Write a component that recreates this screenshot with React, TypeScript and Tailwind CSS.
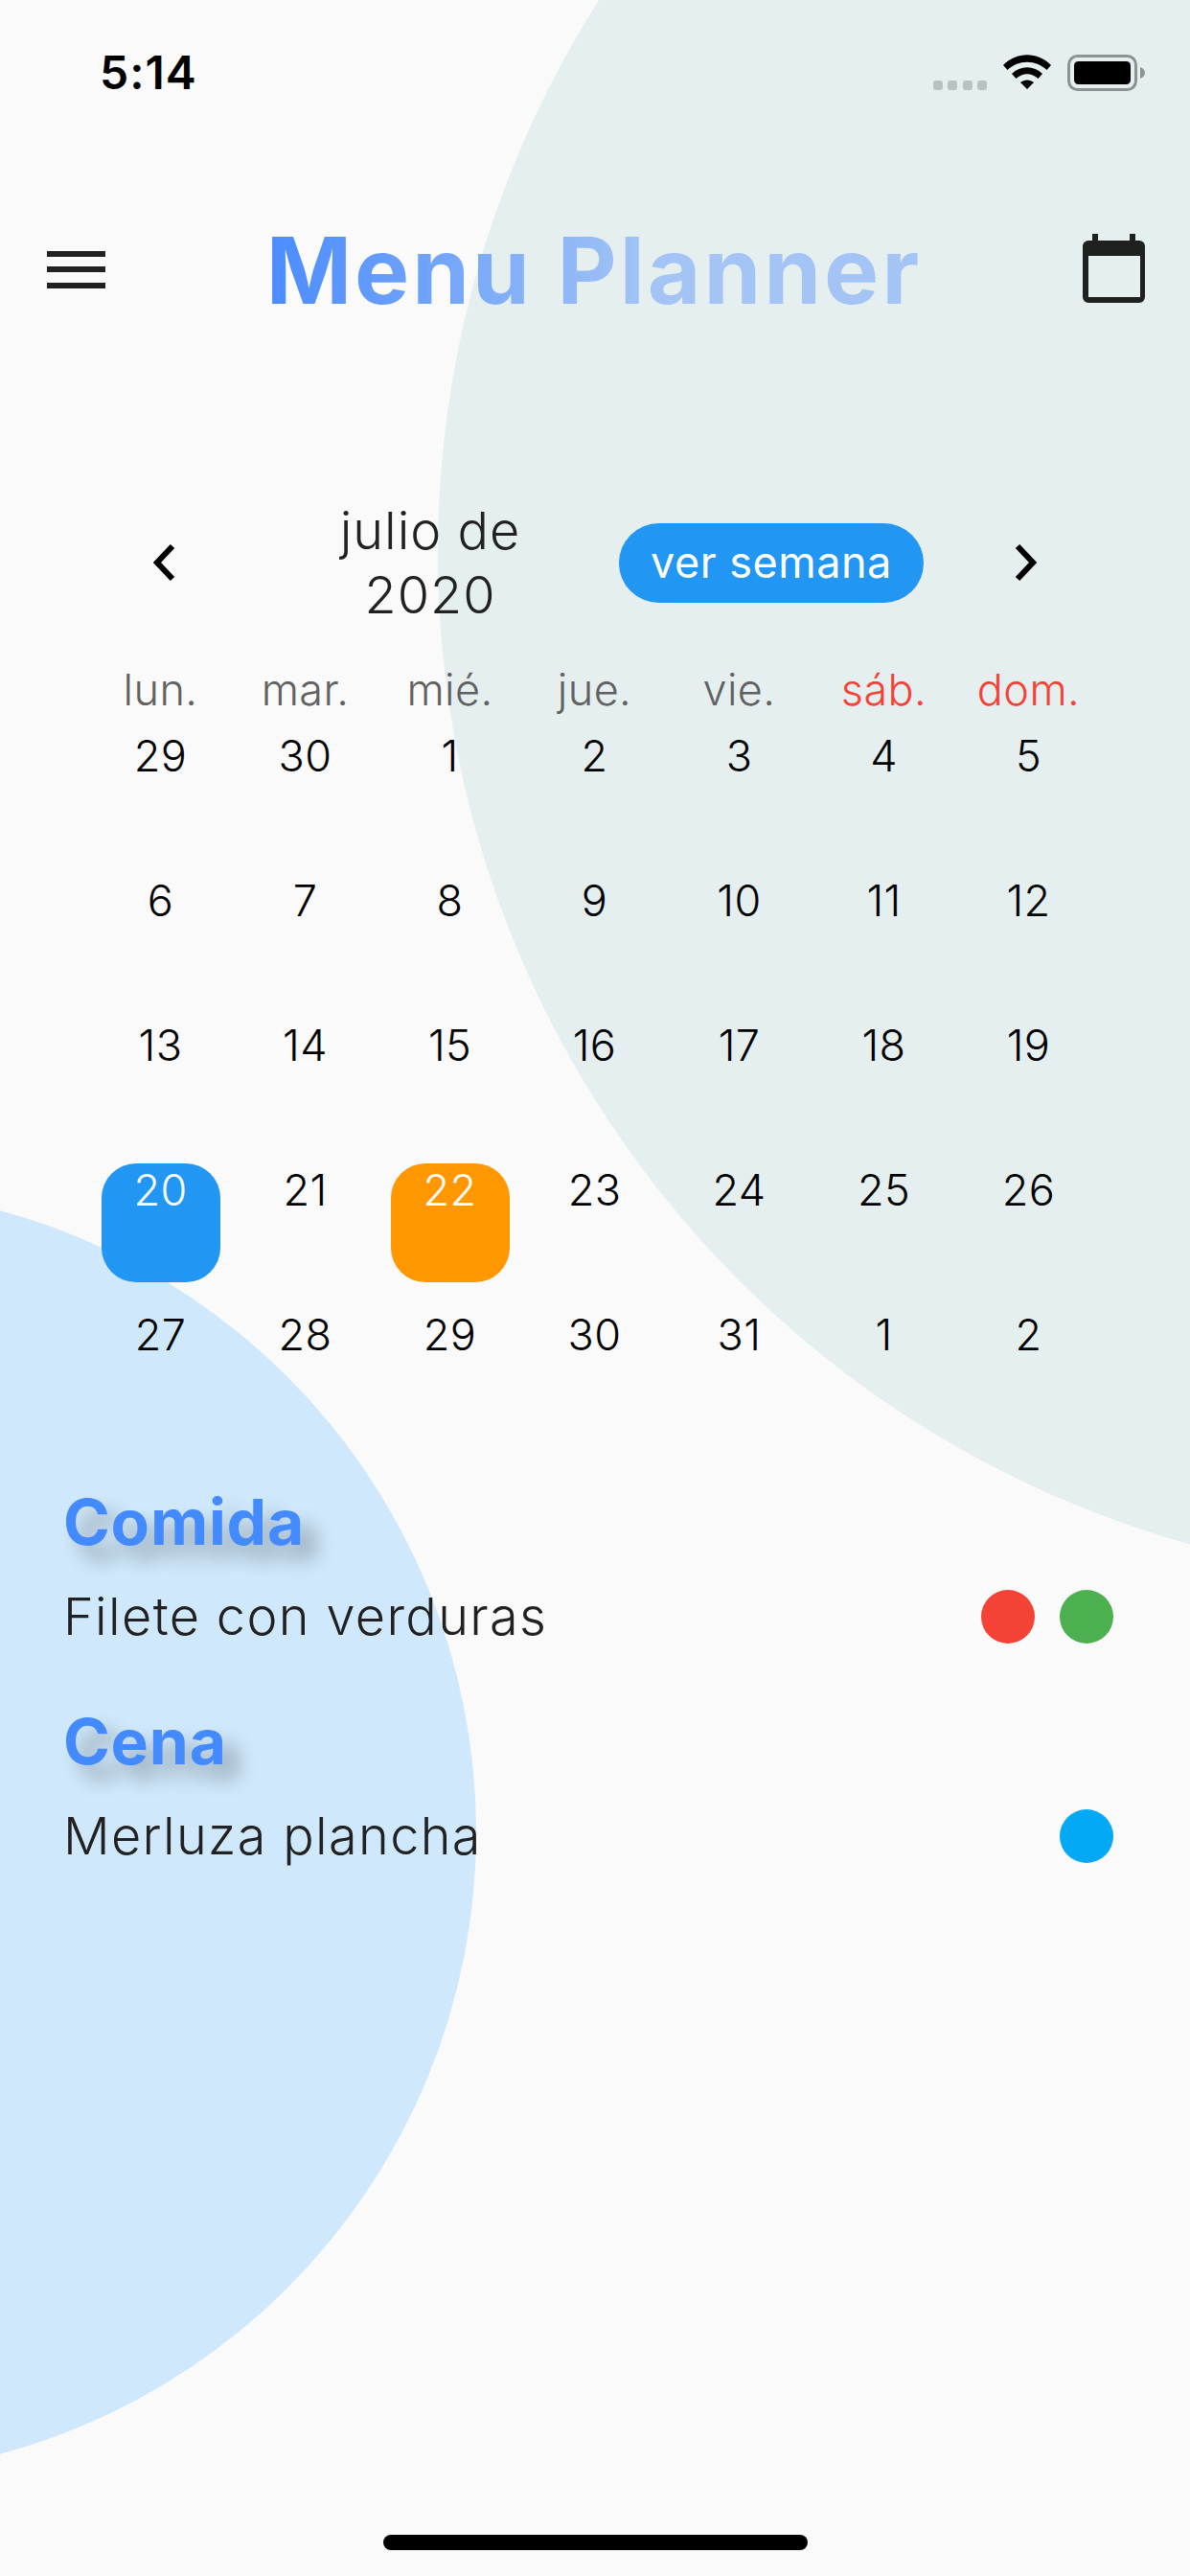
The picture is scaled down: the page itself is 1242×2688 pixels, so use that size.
const font = "font-['Inter','Liberation_Sans',sans-serif]";

const weekdays: [string, boolean][] = [
  ["lun.", false],
  ["mar.", false],
  ["mié.", false],
  ["jue.", false],
  ["vie.", false],
  ["sáb.", true],
  ["dom.", true],
];

const days = [
  29, 30, 1, 2, 3, 4, 5, 6, 7, 8, 9, 10, 11, 12, 13, 14, 15, 16, 17, 18, 19, 20, 21, 22, 23, 24, 25, 26, 27, 28, 29, 30,
  31, 1, 2,
];

function Wifi() {
  return (
    <svg width="50" height="36" viewBox="0 0 50 36" fill="#000">
      <path d="M0 11 C14 -3.5 36 -3.5 50 11 L45.5 16 C34 5 16 5 4.5 16 Z" />
      <path d="M9 20 C18 11 32 11 41 20 L36.5 25 C29.5 18.5 20.5 18.5 13.5 25 Z" />
      <path d="M18 29 C22 25.5 28 25.5 32 29 L25 36 Z" />
    </svg>
  );
}

function Battery() {
  return (
    <svg width="81" height="38" viewBox="0 0 81 38">
      <rect x="1.5" y="1.5" width="70" height="35" rx="9" fill="none" stroke="#8c9493" strokeWidth="3" />
      <rect x="7" y="7" width="59" height="24" rx="4.5" fill="#000" />
      <path d="M76 13 C79 14 81 16.5 81 19 C81 21.5 79 24 76 25 Z" fill="#8c9493" />
    </svg>
  );
}

function CalendarIcon() {
  return (
    <svg width="65" height="72" viewBox="0 0 65 72" className="mb-[4px]">
      <rect x="10" y="0" width="6" height="10" fill="#1e2120" />
      <rect x="49" y="0" width="6" height="10" fill="#1e2120" />
      <path
        fillRule="evenodd"
        fill="#1e2120"
        d="M6 7 H59 A6 6 0 0 1 65 13 V66 A6 6 0 0 1 59 72 H6 A6 6 0 0 1 0 66 V13 A6 6 0 0 1 6 7 Z M6 23 V66 H60 V23 Z"
      />
    </svg>
  );
}

function Chevron({ right }: { right?: boolean }) {
  return (
    <svg width="23" height="38" viewBox="0 0 23 38" fill="none" stroke="#000" strokeWidth="6" strokeLinejoin="miter">
      <path d={right ? "M3 2 L19 19 L3 36" : "M20 2 L4 19 L20 36"} />
    </svg>
  );
}

function Dot({ color }: { color: string }) {
  return <span className={`block w-[56px] h-[56px] rounded-full ${color}`} />;
}

function Meal({ title, dish, dots }: { title: string; dish: string; dots: string[] }) {
  return (
    <section className="flex flex-col">
      <h2 className="h-[80px] leading-[80px] text-[66px] font-bold tracking-[0.8px] text-[#448aff] [text-shadow:15px_15px_20px_rgba(0,0,0,0.3)]">
        {title}
      </h2>
      <div className="mt-[24px] flex h-[70px] items-center justify-between">
        <span className="text-[54px] leading-[70px] font-[350] tracking-[1.35px] text-[#212121]">{dish}</span>
        <div className="flex gap-[26px]">
          {dots.map((d) => (
            <Dot key={d} color={d} />
          ))}
        </div>
      </div>
    </section>
  );
}

export default function App() {
  return (
    <div className={`relative w-[1242px] h-[2688px] overflow-hidden bg-[#fafafa] ${font}`}>
      <div className="absolute left-[457px] top-[-497px] w-[2148px] h-[2148px] rounded-full bg-[#e5eff0]" />
      <div className="absolute left-[-847px] top-[1240px] w-[1344px] h-[1344px] rounded-full bg-[#cfe8fb]" />

      <div className="relative flex flex-col">
        <header className="flex h-[132px] items-start justify-between pl-[104px] pr-[47px] pt-[46px]">
          <span className="text-[48px] leading-[60px] font-semibold tracking-[1px] text-black">5:14</span>
          <div className="flex items-start pt-[11px]">
            <div className="mt-[27px] flex gap-[5.3px]">
              <span className="block w-[10px] h-[10px] rounded-[3px] bg-[#b8c2c1]" />
              <span className="block w-[10px] h-[10px] rounded-[3px] bg-[#b8c2c1]" />
              <span className="block w-[10px] h-[10px] rounded-[3px] bg-[#b8c2c1]" />
              <span className="block w-[10px] h-[10px] rounded-[3px] bg-[#b8c2c1]" />
            </div>
            <div className="ml-[17px]">
              <Wifi />
            </div>
            <div className="ml-[17px]">
              <Battery />
            </div>
          </div>
        </header>

        <nav className="mt-[100px] flex h-[100px] items-center justify-between pl-[49px] pr-[47px]">
          <div className="mb-[2px] flex w-[61px] flex-col gap-[10.5px]">
            <span className="block h-[6px] bg-[#212121]" />
            <span className="block h-[6px] bg-[#212121]" />
            <span className="block h-[6px] bg-[#212121]" />
          </div>
          <h1 className="bg-[linear-gradient(90deg,#4a8bff_0%,#a3c4f4_58%,#a3c4f4_100%)] bg-clip-text text-[96px] leading-[100px] font-bold tracking-[3px] text-transparent">
            Menu Planner
          </h1>
          <CalendarIcon />
        </nav>

        <div className="mt-[188px] flex h-[134px] items-center pl-[160px]">
          <Chevron />
          <div className="ml-[117px] w-[298px] text-center text-[54px] leading-[67px] font-[350] tracking-[1px] text-[#212121]">
            julio de
            <br />
            2020
          </div>
          <button className="ml-[48px] flex h-[83px] w-[318px] items-center justify-center rounded-full bg-[#2196f3] text-[45px] tracking-[0.5px] text-white">
            ver semana
          </button>
          <div className="ml-[95px]">
            <Chevron right />
          </div>
        </div>

        <div className="mt-[39px] ml-[92px] grid h-[54px] w-[1057px] grid-cols-7">
          {weekdays.map(([d, red]) => (
            <span
              key={d}
              className={`text-center text-[45px] leading-[54px] font-[350] tracking-[0.4px] ${red ? "text-[#f44336]" : "text-[#616161]"}`}
            >
              {d}
            </span>
          ))}
        </div>

        <div className="ml-[92px] grid w-[1057px] grid-cols-7 grid-rows-[repeat(5,151px)]">
          {days.map((d, i) => {
            const bg = i === 21 ? "bg-[#2196f3] text-white" : i === 23 ? "bg-[#ff9800] text-white" : "text-black";
            return (
              <div key={i} className="flex items-start justify-center p-[13.5px]">
                <div
                  className={`h-[124px] w-[124px] rounded-[36px] pt-[1px] text-center text-[45px] leading-[54px] font-[350] tracking-[0.4px] ${bg}`}
                >
                  {d}
                </div>
              </div>
            );
          })}
        </div>

        <main className="mt-[46px] flex flex-col gap-[55px] pl-[66px] pr-[80px]">
          <Meal title="Comida" dish="Filete con verduras" dots={["bg-[#f44336]", "bg-[#4caf50]"]} />
          <Meal title="Cena" dish="Merluza plancha" dots={["bg-[#03a9f4]"]} />
        </main>
      </div>

      <div className="absolute bottom-[27px] left-[400px] h-[16px] w-[443px] rounded-full bg-black" />
    </div>
  );
}
